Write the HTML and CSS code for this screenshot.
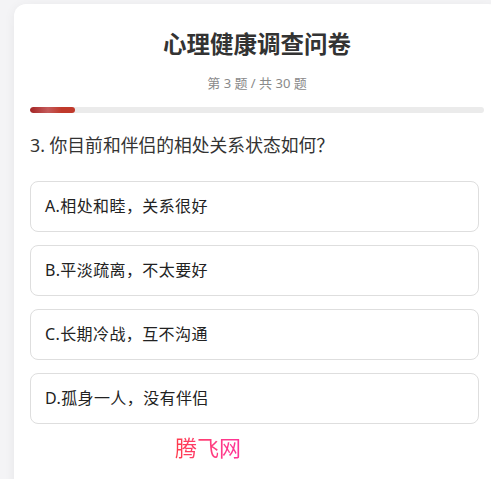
FILE: index.html
```html
<!DOCTYPE html>
<html lang="zh-CN">
<head>
<meta charset="utf-8">
<title>心理健康调查问卷</title>
<link rel="stylesheet" href="styles.css">
</head>
<body>
<div class="card">
  <h1 class="title">心理健康调查问卷</h1>
  <div class="counter">第 3 题 / 共 30 题</div>
  <div class="progress"><div class="progress-fill" style="width:10%"></div></div>
  <div class="question">3. 你目前和伴侣的相处关系状态如何？</div>
  <div class="options">
    <div class="option">A.相处和睦，关系很好</div>
    <div class="option">B.平淡疏离，不太要好</div>
    <div class="option">C.长期冷战，互不沟通</div>
    <div class="option">D.孤身一人，没有伴侣</div>
  </div>
  <div class="watermark">腾飞网</div>
</div>
</body>
</html>
```
FILE: styles.css
```css
html, body {
  margin: 0;
  padding: 0;
  overflow: hidden;
  background: #f4f4f6;
  font-family: "Noto Sans", "Noto Sans CJK SC", sans-serif;
}
.card {
  box-sizing: border-box;
  width: 486px;
  min-height: 600px;
  margin: 4px 0 0 14px;
  padding: 24px 16px 0 16px;
  background: #ffffff;
  border-radius: 12px;
  box-shadow: 0 2px 12px rgba(0, 0, 0, 0.06);
}
.title {
  margin: 0;
  font-size: 23.5px;
  line-height: 32px;
  font-weight: 700;
  color: #333333;
  text-align: center;
}
.counter {
  margin-top: 13px;
  font-size: 13px;
  line-height: 20px;
  color: #8a8a8a;
  text-align: center;
}
.progress {
  margin-top: 14px;
  height: 6px;
  border-radius: 3px;
  background: #ebebeb;
  overflow: hidden;
}
.progress-fill {
  height: 100%;
  border-radius: 3px;
  background: linear-gradient(90deg, #a52525 0%, #c45a5a 40%, #c0392b 70%, #c0392b 100%);
}
.question {
  margin-top: 20px;
  font-size: 17.8px;
  line-height: 24px;
  color: #333333;
}
.options {
  margin-top: 24px;
  margin-right: 5px;
  display: flex;
  flex-direction: column;
  gap: 13px;
}
.option {
  padding: 14px 14px;
  border: 1px solid #dedede;
  border-radius: 8px;
  font-size: 16px;
  letter-spacing: 0.4px;
  line-height: 21px;
  color: #222222;
}
.watermark {
  margin-top: 7px;
  margin-left: 145px;
  font-size: 22px;
  line-height: 30px;
  font-family: "Noto Sans CJK SC", sans-serif;
  display: inline-block;
  background: linear-gradient(90deg, #ff3a4a, #ff3d7a 50%, #ff3399);
  -webkit-background-clip: text;
  background-clip: text;
  color: transparent;
}
```
